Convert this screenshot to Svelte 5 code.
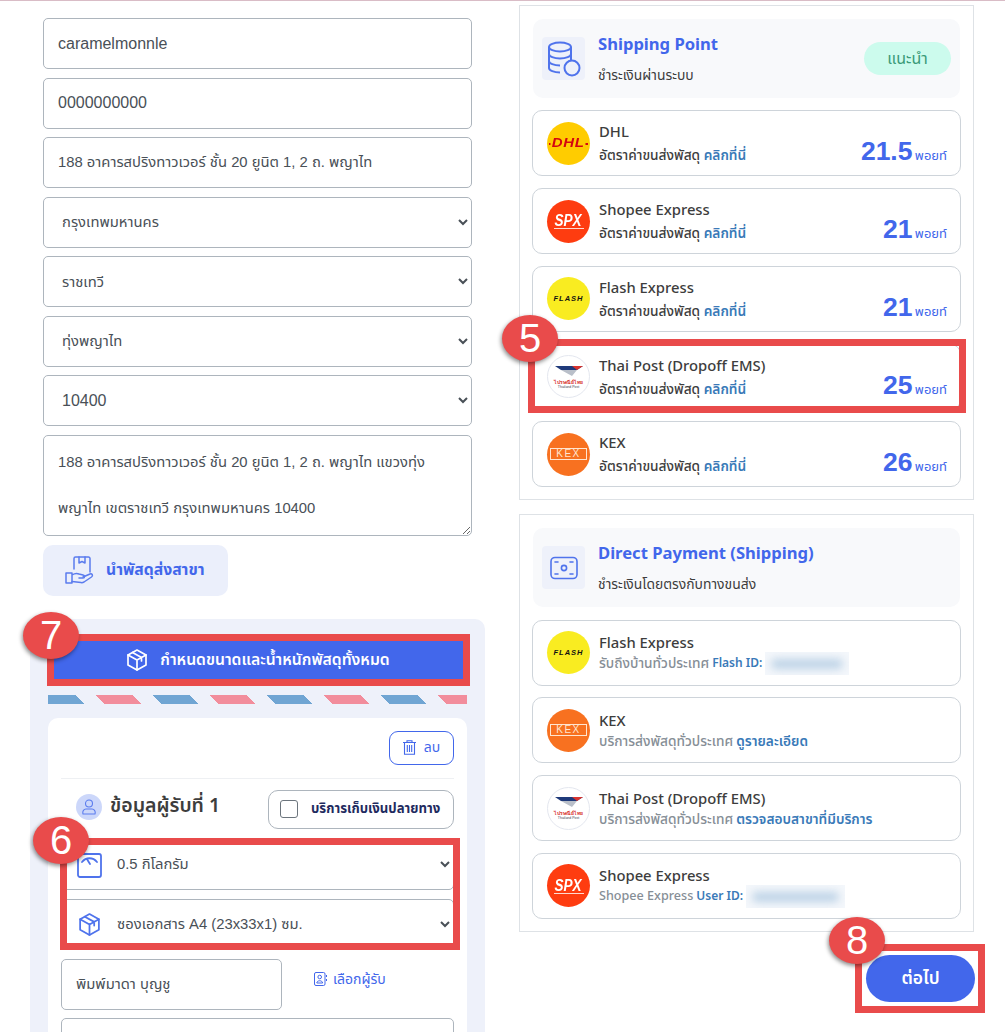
<script>
  const shipping = [
    { logo: 'dhl', name: 'DHL', rate: '21.5' },
    { logo: 'spx', name: 'Shopee Express', rate: '21' },
    { logo: 'flash', name: 'Flash Express', rate: '21' },
    { logo: 'post', name: 'Thai Post (Dropoff EMS)', rate: '25', marked: true },
    { logo: 'kex', name: 'KEX', rate: '26' }
  ];

  const direct = [
    { logo: 'flash', name: 'Flash Express', sub: 'รับถึงบ้านทั่วประเทศ', link: 'Flash ID:', hidden: 84 },
    { logo: 'kex', name: 'KEX', sub: 'บริการส่งพัสดุทั่วประเทศ', link: 'ดูรายละเอียด' },
    { logo: 'post', name: 'Thai Post (Dropoff EMS)', sub: 'บริการส่งพัสดุทั่วประเทศ', link: 'ตรวจสอบสาขาที่มีบริการ' },
    { logo: 'spx', name: 'Shopee Express', sub: 'Shopee Express', subLatin: true, link: 'User ID:', hidden: 99 }
  ];
</script>

{#snippet logo(kind)}
  <div class="logo {kind}">
    {#if kind === 'dhl'}
      <span class="dhl-bar"></span><span class="dhl-text">DHL</span>
    {:else if kind === 'spx'}
      <span class="spx-text">SPX</span><span class="spx-line"></span>
    {:else if kind === 'flash'}
      <span class="flash-text">FLASH</span>
    {:else if kind === 'kex'}
      <span class="kex-text">KEX</span>
    {:else}
      <svg width="28" height="12" viewBox="0 0 28 12">
        <path d="M0 1h28l-6 4H6z" fill="#1f3a7a" />
        <path d="M6 5h16l-5 6z" fill="#b9bfc9" />
        <path d="M17 1h11l-6 4z" fill="#d8342f" />
      </svg>
      <span class="post-th">ไปรษณีย์ไทย</span>
      <span class="post-en">Thailand Post</span>
    {/if}
  </div>
{/snippet}

{#snippet boxIcon(size, color)}
  <svg width={size} height={size} viewBox="0 0 24 24" fill="none" stroke={color} stroke-width="1.7" stroke-linejoin="round" stroke-linecap="round">
    <path d="M12 2l9 5v10l-9 5-9-5V7z" />
    <path d="M3 7l9 5 9-5M12 12v10M7.500 4.500l9 5v3.500" />
  </svg>
{/snippet}

<div class="page">
  <div class="left">
    <input class="field latin" value="caramelmonnle" />
    <input class="field latin" value="0000000000" />
    <input class="field" value="188 อาคารสปริงทาวเวอร์ ชั้น 20 ยูนิต 1, 2 ถ. พญาไท" />
    <select class="field"><option>กรุงเทพมหานคร</option></select>
    <select class="field"><option>ราชเทวี</option></select>
    <select class="field"><option>ทุ่งพญาไท</option></select>
    <select class="field latin"><option>10400</option></select>
    <textarea class="field area" value={"188 อาคารสปริงทาวเวอร์ ชั้น 20 ยูนิต 1, 2 ถ. พญาไท แขวงทุ่ง\nพญาไท เขตราชเทวี กรุงเทพมหานคร 10400"}></textarea>

    <button class="branch">
      <svg width="30" height="30" viewBox="0 0 30 30" fill="none" stroke="#5b7cee" stroke-width="1.5" stroke-linejoin="round" stroke-linecap="round">
        <path d="M9 14V3.500a1.500 1.500 0 0 1 1.500-1.500h13a1.500 1.500 0 0 1 1.500 1.500V17" />
        <path d="M14 2v6l3-1.500L20 8V2" />
        <path d="M1 18h6v10H1zM7 20c3-2 5-2 7-1l4 1c2 .5 2 3 0 3h-4" />
        <path d="M18 22l7-3c2-.8 3.500 1.500 1.500 3L19 27c-1 .6-2 .8-3 .6l-9-1" />
      </svg>
      นำพัสดุส่งสาขา
    </button>

    <div class="parcel">
      <button class="pack">
        {@render boxIcon(24, '#fff')}
        กำหนดขนาดและน้ำหนักพัสดุทั้งหมด
        <span class="mark mark-pack"><span class="badge">7</span></span>
      </button>
      <div class="stripes"></div>

      <div class="card">
        <div class="card-top">
          <button class="remove">
            <svg width="13" height="15" viewBox="0 0 13 15" fill="none" stroke="#4267eb" stroke-width="1.100">
              <path d="M0 2.500h13M4 2.500V.7h5v1.800M1.500 2.500v11.800h10V2.500M4.300 5v7M6.500 5v7M8.700 5v7" />
            </svg>
            ลบ
          </button>
        </div>

        <div class="receiver">
          <div class="who">
            <span class="avatar">
              <svg width="14" height="16" viewBox="0 0 14 16" fill="none" stroke="#5b7cee" stroke-width="1.100">
                <circle cx="7" cy="4.500" r="3.500" />
                <path d="M1 15c-.8-3 1-5 3-5h6c2 0 3.800 2 3 5z" />
              </svg>
            </span>
            <h3>ข้อมูลผู้รับที่ 1</h3>
          </div>
          <label class="cod"><span class="check"></span>บริการเก็บเงินปลายทาง</label>
        </div>

        <div class="selects">
          <select class="field icon-field"><option>0.5 กิโลกรัม</option></select>
          <select class="field icon-field"><option>ซองเอกสาร A4 (23x33x1) ซม.</option></select>
          <svg class="scale" width="25" height="25" viewBox="0 0 25 25" fill="none" stroke="#4f73ec" stroke-width="1.800">
            <rect x="1" y="1" width="23" height="23" rx="2" />
            <path d="M5 9c4-5 11-5 15 0M10.500 7l2.500 4" stroke-linecap="round" />
          </svg>
          <span class="pkg">{@render boxIcon(25, '#4f73ec')}</span>
          <span class="mark mark-selects"><span class="badge">6</span></span>
        </div>

        <div class="name-row">
          <input class="field name" value="พิมพ์มาดา บุญชู" />
          <a class="choose" href="#top">
            <svg width="13" height="14" viewBox="0 0 13 14" fill="none" stroke="#4267eb" stroke-width="1">
              <rect x=".5" y=".5" width="10.500" height="13" rx="1.500" />
              <circle cx="5.700" cy="5" r="1.800" />
              <path d="M2.800 11c0-3 5.800-3 5.800 0zM12.500 3v2M12.500 7v2" />
            </svg>
            เลือกผู้รับ
          </a>
        </div>
        <input class="field" />
      </div>
    </div>
  </div>

  <div class="right">
    <section class="panel">
      <div class="head">
        <div class="head-icon">
          <svg width="34" height="36" viewBox="0 0 34 36" fill="none" stroke="#4f73ec" stroke-width="2">
            <ellipse cx="13" cy="6" rx="11" ry="4.500" />
            <path d="M2 6v21c0 2.500 5 4.500 11 4.500M24 6v14M2 13c0 2.500 5 4.500 11 4.500s11-2 11-4.500M2 20c0 2.500 5 4.500 11 4.500" />
            <circle cx="25" cy="27" r="7.500" />
          </svg>
        </div>
        <div class="head-text">
          <h2>Shipping Point</h2>
          <p>ชำระเงินผ่านระบบ</p>
        </div>
        <span class="pill">แนะนำ</span>
      </div>

      {#each shipping as row}
        <div class="row">
          {@render logo(row.logo)}
          <div class="info">
            <b>{row.name}</b>
            <p>อัตราค่าขนส่งพัสดุ <a href="#top">คลิกที่นี่</a></p>
          </div>
          <div class="rate"><strong>{row.rate}</strong> พอยท์</div>
          {#if row.marked}
            <span class="mark mark-row"><span class="badge">5</span></span>
          {/if}
        </div>
      {/each}
    </section>

    <section class="panel second">
      <div class="head">
        <div class="head-icon">
          <svg width="28" height="24" viewBox="0 0 28 24" fill="none" stroke="#4f73ec" stroke-width="1.600" stroke-linecap="round">
            <rect x="1" y="1.500" width="26" height="21" rx="4" />
            <circle cx="14" cy="12" r="2.600" />
            <path d="M5 6h3M20 6h3M5 18h3M20 18h3" />
          </svg>
        </div>
        <div class="head-text">
          <h2>Direct Payment (Shipping)</h2>
          <p>ชำระเงินโดยตรงกับทางขนส่ง</p>
        </div>
      </div>

      {#each direct as row}
        <div class="row">
          {@render logo(row.logo)}
          <div class="info tight">
            <b>{row.name}</b>
            <p class="muted">
              <span class:sub-latin={row.subLatin}>{row.sub}</span>
              <a href="#top" class:id-link={row.hidden}>{row.link}</a>
              {#if row.hidden}
                <span class="hidden" style="width: {row.hidden}px"><i></i></span>
              {/if}
            </p>
          </div>
        </div>
      {/each}
    </section>

    <div class="actions">
      <button class="next">
        ต่อไป
        <span class="mark mark-next"><span class="badge">8</span></span>
      </button>
    </div>
  </div>
</div>

<style>
  :global(body) {
    margin: 0;
    background: #fff;
    overflow: hidden;
  }
  .page {
    --thai: "Noto Sans", "Noto Sans Thai", "Open Sans", sans-serif;
    display: grid;
    grid-template-columns: 429px 455px;
    column-gap: 47px;
    height: 1031px;
    padding-left: 43px;
    border-top: 1px solid #d9bcc6;
    overflow: hidden;
    font-family: var(--thai);
    color: #3d3d3d;
  }
  .left {
    padding-top: 17px;
  }
  .field {
    display: block;
    box-sizing: border-box;
    width: 100%;
    height: 51px;
    margin: 0 0 8.500px;
    padding: 0 14px;
    border: 1px solid #adb5bd;
    border-radius: 5px;
    background-color: #fff;
    font-family: "Liberation Sans", "Noto Sans Thai", "Noto Sans", Arial, sans-serif;
    font-size: 14.800px;
    color: #495057;
    outline: none;
  }
  .latin {
    font-size: 16px;
  }
  .area {
    height: 101px;
    padding: 3px 14px;
    line-height: 46px;
    resize: vertical;
  }
  .branch {
    display: flex;
    align-items: center;
    gap: 11px;
    width: 185px;
    height: 51px;
    margin-top: 9px;
    padding: 0 0 0 22px;
    border: 0;
    border-radius: 10px;
    background: #ebeffb;
    font-family: var(--thai);
    font-size: 15.700px;
    font-weight: 700;
    color: #4267eb;
  }
  .parcel {
    width: 419px;
    margin: 23px 0 0 -13px;
    padding: 16px 18px 0;
    border-radius: 10px;
    background: #eef1fa;
  }
  .pack {
    position: relative;
    display: flex;
    align-items: center;
    justify-content: center;
    gap: 11px;
    width: 100%;
    height: 50px;
    border: 0;
    background: #4267eb;
    font-family: var(--thai);
    font-size: 15.700px;
    font-weight: 600;
    color: #fff;
  }
  .stripes {
    height: 9px;
    margin-top: 10px;
    background: repeating-linear-gradient(
      45deg,
      #70a5d3 0 26.160px,
      transparent 26.160px 40.300px,
      #f28d9c 40.300px 66.460px,
      transparent 66.460px 80.600px
    );
  }
  .card {
    height: 320px;
    margin-top: 14px;
    padding: 13px 13px 0;
    border-radius: 10px 10px 0 0;
    background: #fff;
  }
  .card-top {
    display: flex;
    justify-content: flex-end;
    padding-bottom: 13px;
    border-bottom: 1px solid #eef0f3;
  }
  .remove {
    display: flex;
    align-items: center;
    justify-content: center;
    gap: 8px;
    width: 65px;
    height: 34px;
    padding: 0;
    border: 1px solid #4267eb;
    border-radius: 9px;
    background: #fff;
    font-family: var(--thai);
    font-size: 14px;
    color: #4267eb;
  }
  .receiver {
    display: flex;
    justify-content: space-between;
    padding-top: 11px;
  }
  .who {
    display: flex;
    align-items: flex-start;
    gap: 8px;
    padding: 3px 0 0 15px;
  }
  .avatar {
    display: flex;
    align-items: center;
    justify-content: center;
    width: 26px;
    height: 26px;
    margin-top: 1px;
    border-radius: 50%;
    background: #ccd7fa;
  }
  h3 {
    margin: 0;
    font-size: 19.500px;
    line-height: 24px;
    font-weight: 600;
    color: #3d3d3d;
  }
  .cod {
    display: flex;
    align-items: center;
    gap: 13px;
    box-sizing: border-box;
    width: 186px;
    height: 39px;
    padding-left: 11px;
    border: 1px solid #adb5bd;
    border-radius: 10px;
    font-size: 13.200px;
    font-weight: 700;
    color: #1f2b60;
  }
  .check {
    width: 18px;
    height: 18px;
    box-sizing: border-box;
    border: 1px solid #6c757d;
    border-radius: 3px;
  }
  .selects {
    position: relative;
    margin-top: 10px;
  }
  .selects .field {
    margin-bottom: 9px;
  }
  .icon-field {
    padding-left: 51px;
  }
  .scale, .pkg {
    position: absolute;
    left: 16px;
  }
  .scale {
    top: 14px;
  }
  .pkg {
    top: 73px;
    height: 25px;
  }
  .name-row {
    display: flex;
    gap: 32px;
  }
  .name {
    width: 221px;
  }
  .choose {
    display: flex;
    align-items: center;
    gap: 6px;
    height: 41px;
    font-size: 14px;
    color: #4267eb;
    text-decoration: none;
  }

  .right {
    padding-top: 4px;
  }
  .panel {
    box-sizing: border-box;
    height: 495px;
    padding: 13px 13px 0;
    border: 1px solid #dee2e6;
  }
  .second {
    height: 418px;
    margin-top: 14px;
  }
  .head {
    display: flex;
    align-items: flex-start;
    box-sizing: border-box;
    width: 427px;
    height: 79px;
    padding: 18px 10px 0 9px;
    border-radius: 10px;
    background: #f8f9fb;
    margin-bottom: 12.400px;
  }
  .second .head {
    margin-bottom: 12.600px;
  }
  .head-icon {
    display: flex;
    align-items: center;
    justify-content: center;
    flex: none;
    width: 43px;
    height: 43px;
    border-radius: 4px;
    background: #eef1fa;
  }
  .head-text {
    flex: 1;
    padding-left: 13px;
    margin-top: -5px;
  }
  h2 {
    margin: 0;
    font-size: 16.600px;
    line-height: 24px;
    font-weight: 700;
    color: #4267eb;
  }
  .head-text p {
    margin: 9px 0 0;
    font-size: 13.900px;
    line-height: 20px;
  }
  .pill {
    display: flex;
    align-items: center;
    justify-content: center;
    width: 87px;
    height: 33px;
    margin: 5px -1px 0 0;
    border-radius: 17px;
    background: #ccfbed;
    font-size: 16px;
    color: #3a9a78;
  }
  .row {
    position: relative;
    display: flex;
    align-items: center;
    box-sizing: border-box;
    width: 429px;
    height: 66px;
    margin: 0 0 11.750px -1px;
    padding: 0 13px 0 14px;
    border: 1px solid #ced4da;
    border-radius: 10px;
  }
  .logo {
    position: relative;
    display: flex;
    flex-direction: column;
    align-items: center;
    justify-content: center;
    flex: none;
    box-sizing: border-box;
    width: 43px;
    height: 43px;
    border-radius: 50%;
    overflow: hidden;
    font-family: "Liberation Sans", Arial, sans-serif;
  }
  .dhl {
    background: #ffcc00;
  }
  .dhl-bar {
    position: absolute;
    left: 2px;
    right: 2px;
    top: 21px;
    height: 2px;
    background: #d40511;
  }
  .dhl-text {
    position: relative;
    padding: 0 1px;
    background: #ffcc00;
    font-size: 12px;
    line-height: 11px;
    font-weight: 700;
    font-style: italic;
    color: #d40511;
    letter-spacing: .5px;
    transform: scaleX(1.250);
  }
  .spx {
    background: #fe3c10;
  }
  .spx-text {
    font-size: 16px;
    line-height: 15px;
    font-weight: 700;
    font-style: italic;
    color: #fff;
    transform: scaleX(.85);
  }
  .spx-line {
    width: 30px;
    height: 1px;
    background: #ffd9cf;
  }
  .flash {
    background: #f9ec21;
  }
  .flash-text {
    font-size: 7.500px;
    font-weight: 700;
    font-style: italic;
    color: #111;
    letter-spacing: 1px;
  }
  .kex {
    background: #f87120;
  }
  .kex-text {
    width: 37px;
    height: 12px;
    border: 1px solid #ffe5d0;
    box-sizing: border-box;
    font-size: 10px;
    line-height: 10px;
    text-align: center;
    color: #ffe5d0;
    letter-spacing: 1.500px;
  }
  .post {
    border: 1px solid #e4e7ef;
    background: #fff;
  }
  .post-th {
    margin-top: 2px;
    font-size: 5px;
    line-height: 6px;
    font-weight: 700;
    color: #d8342f;
    white-space: nowrap;
  }
  .post-en {
    font-size: 3.500px;
    line-height: 4px;
    color: #445;
    white-space: nowrap;
  }
  .info {
    flex: 1;
    margin-top: -1px;
    padding-left: 9px;
  }
  .info b {
    display: block;
    font-size: 14.800px;
    line-height: 22px;
    font-weight: 500;
    color: #3d3d3d;
  }
  .info p {
    margin: 3px 0 0;
    font-size: 13.700px;
    line-height: 20px;
    font-weight: 500;
    white-space: nowrap;
  }
  .info a {
    color: #3a7ab8;
    text-decoration: none;
    font-weight: 600;
  }
  .tight p {
    display: flex;
    align-items: center;
    gap: 3px;
    margin-top: 0;
  }
  .muted {
    color: #868e96;
  }
  .sub-latin {
    font-size: 12.600px;
  }
  .info .id-link {
    font-size: 12px;
  }
  .hidden {
    display: block;
    height: 23px;
    margin: -2px 0;
    overflow: hidden;
    background: #f4f7fb;
  }
  .hidden i {
    display: block;
    height: 10px;
    margin: 7px 6px;
    border-radius: 5px;
    background: #bcd2e6;
    filter: blur(4px);
  }
  .rate {
    align-self: flex-end;
    padding: 0 0 6px;
    font-size: 13px;
    line-height: 27px;
    color: #4267eb;
  }
  .rate strong {
    margin-right: -1px;
    font-family: "Liberation Sans", Arial, sans-serif;
    font-size: 26.500px;
  }
  .actions {
    display: flex;
    justify-content: flex-end;
    margin: 23px -1px 0 0;
  }
  .next {
    position: relative;
    width: 109px;
    height: 47px;
    border: 0;
    border-radius: 24px;
    background: #4267eb;
    font-family: var(--thai);
    font-size: 17.500px;
    font-weight: 600;
    color: #fff;
  }
  .mark {
    position: absolute;
    box-sizing: border-box;
    border: 7px solid #e94b4b;
    pointer-events: none;
  }
  .mark-row {
    inset: -6px -6px -4px -5px;
  }
  .mark-pack {
    inset: -1px -3px -1px -1px;
  }
  .mark-selects {
    inset: -1px -6px 0 -1px;
  }
  .mark-next {
    inset: -11px -10px -11px -11px;
  }
  .badge {
    position: absolute;
    left: -33px;
    top: -31px;
    width: 56px;
    height: 47px;
    border-radius: 50%;
    background: #e94b4b;
    box-shadow: -1px 2px 4px rgba(0, 0, 0, .45);
    font-family: "Liberation Sans", Arial, sans-serif;
    font-size: 40px;
    line-height: 47px;
    font-weight: 400;
    text-align: center;
    color: #fff;
  }
  .mark-pack .badge {
    left: -31px;
    top: -29px;
  }
  .mark-selects .badge {
    left: -34px;
    top: -28px;
  }
  .mark-next .badge {
    left: -33px;
    top: -34px;
  }
</style>
